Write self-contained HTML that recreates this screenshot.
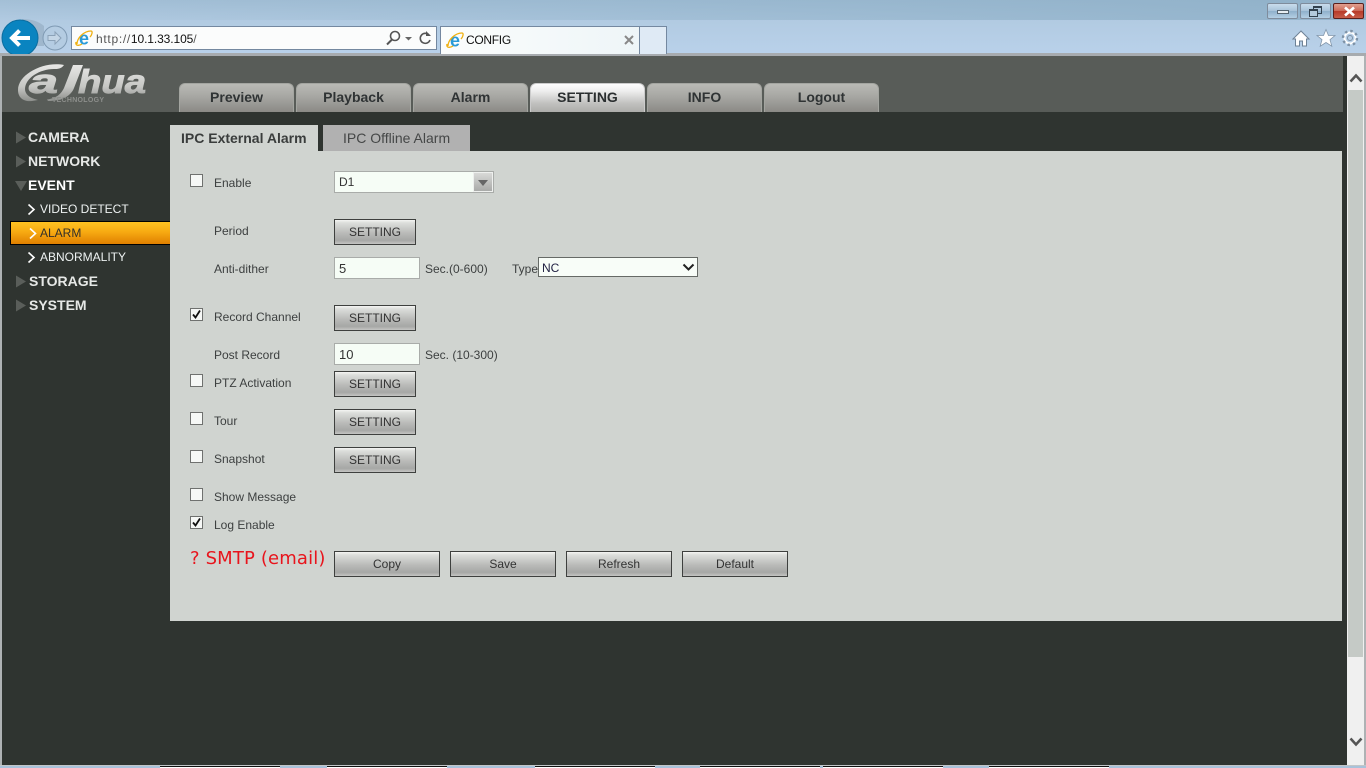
<!DOCTYPE html>
<html><head><meta charset="utf-8"><title>CONFIG</title>
<style>
html,body{margin:0;padding:0;width:1366px;height:768px;overflow:hidden;background:#b9d1ea;font-family:"Liberation Sans",Arial,sans-serif}
div,span,svg{position:absolute;box-sizing:border-box}
.t{white-space:nowrap;line-height:1}
.tab{top:83px;height:29px;width:115px;border:1px solid #a3a5a0;border-bottom:none;border-radius:6px 6px 0 0;background:linear-gradient(#b9bab5,#a9a9a5 40%,#8b8a86);color:#2f3334;font:bold 14px/27px "Liberation Sans",sans-serif;text-align:center}
.tab.on{background:linear-gradient(#fdfdfd,#eeeeee 25%,#c0c0be 70%,#adadaa);color:#2b2f30;border-color:#ccc}
.m{left:28px;color:#e6e8e6;font:bold 14px/1 "Liberation Sans",sans-serif;white-space:nowrap}
.s{color:#eef2f2;font:12px/1 "Liberation Sans",sans-serif;white-space:nowrap}
.l{color:#3d4040;font:12px/1 "Liberation Sans",sans-serif;white-space:nowrap}
.cb{left:190px;width:13px;height:13px;border:1px solid #6f716f;background:#f6f8f6}
.btn{border:1px solid #3e403e;background:linear-gradient(#f4f5f3,#dcdedb 12%,#b9bab8 55%,#a6a7a5 85%,#c4c5c3);color:#333;font:12px/25px "Liberation Sans",sans-serif;text-align:center;height:26px}
.inp{left:334px;width:86px;height:22px;border:1px solid #a9aca9;background:#f6fdf6;color:#333;font:13px/21px "Liberation Sans",sans-serif;padding-left:4px}
.sw{border:1px solid #7f8c9c;border-radius:2px;top:3px;height:16px;width:31px;background:linear-gradient(#c9dcec,#a9c4da 48%,#8fb0cb 52%,#b4cfe4)}
</style></head><body>
<!-- browser chrome -->
<div style="left:0;top:0;width:1366px;height:54px;background:linear-gradient(#a3bfd6,#b2cbe2 40%,#b9d1ea)"></div>
<div style="left:0;top:0;width:1366px;height:20px;background:linear-gradient(90deg,rgba(147,179,203,0),rgba(140,174,198,.8))"></div>
<div style="left:0;top:53px;width:1366px;height:3px;background:#a7abaf"></div>
<svg style="left:0;top:16px" width="70" height="38"><path d="M22 3 Q36 3 44 10 L44 30 L22 30Z" fill="#9fb7cd"/><circle cx="20" cy="22" r="18" fill="#0a84c0" stroke="#0a6d9f"/><path d="M30 22H13M19.500 14.500L12 22l7.500 7.500" fill="none" stroke="#fff" stroke-width="4"/><circle cx="55" cy="22" r="12" fill="#b4cce2" stroke="#7f9ab3"/><path d="M48 19.500h7v-3.500l6 6-6 6v-3.500h-7z" fill="#c4d6e6" stroke="#8ba2b8" stroke-width="1"/></svg>
<div style="left:71px;top:26px;width:366px;height:24px;border:1px solid #7488a0;background:#fbfcfc"></div>
<svg style="left:75px;top:29px" width="18" height="18" viewBox="0 0 18 18"><text x="9" y="15.500" text-anchor="middle" font-family="Liberation Sans" font-weight="bold" font-size="18" fill="#2a9bd8">e</text><path d="M2 15C2 9 9 2 16 2c2 0 1 4-1 6M1 13c-1 4 3 4 6 2" fill="none" stroke="#efb010" stroke-width="1.300"/></svg>
<div class="t" style="left:96px;top:33px;font-size:12px;color:#555"><span style="position:static;letter-spacing:.7px">http://</span><span style="position:static;color:#111;letter-spacing:-.1px">10.1.33.105</span>/</div>
<svg style="left:384px;top:29px" width="50" height="18"><circle cx="11" cy="7" r="4.500" fill="none" stroke="#555" stroke-width="1.600"/><path d="M8 10.500L3 15.500" stroke="#555" stroke-width="2"/><path d="M21 8h7l-3.500 3.500z" fill="#666"/><path d="M45 6a5 5 0 1 0 1 5" fill="none" stroke="#555" stroke-width="1.600"/><path d="M42 2v5h5z" fill="#555"/></svg>
<div style="left:440px;top:26px;width:227px;height:28px;border:1px solid #7488a0;border-bottom:none;background:#dfeaf5"></div>
<div style="left:440px;top:26px;width:200px;height:28px;border:1px solid #7488a0;border-bottom:none;background:linear-gradient(90deg,#fbfdfc,#eef5f8)"></div>
<svg style="left:446px;top:31px" width="18" height="18" viewBox="0 0 18 18"><text x="9" y="15.500" text-anchor="middle" font-family="Liberation Sans" font-weight="bold" font-size="18" fill="#2a9bd8">e</text><path d="M2 15C2 9 9 2 16 2c2 0 1 4-1 6M1 13c-1 4 3 4 6 2" fill="none" stroke="#efb010" stroke-width="1.300"/></svg>
<div class="t" style="left:466px;top:34px;font-size:12px;color:#111;letter-spacing:-.3px">CONFIG</div>
<svg style="left:624px;top:35px" width="10" height="10"><path d="M1 1l8 8M9 1l-8 8" stroke="#888" stroke-width="2"/></svg>
<div class="sw" style="left:1267px"><div style="left:9px;top:6px;width:12px;height:4px;background:#e8eef2;border:1px solid #55646f"></div></div>
<div class="sw" style="left:1300px"><div style="left:12px;top:2px;width:9px;height:8px;border:1px solid #33424f;border-top-width:2px"></div><div style="left:8px;top:5px;width:9px;height:8px;border:1px solid #33424f;border-top-width:2px;background:#b4cbdd"></div></div>
<div class="sw" style="left:1333px;width:31px;border-color:#5a1f1c;background:linear-gradient(#e0a090,#cc6a58 48%,#b83a28 52%,#c65c48)"><svg style="left:9px;top:2px" width="13" height="11"><path d="M2 1.500l9 8M11 1.500l-9 8" stroke="#fff" stroke-width="2.600"/></svg></div>
<svg style="left:1292px;top:28px" width="70" height="20"><path d="M9 3L1 11h2.500v7h4v-5h3v5h4v-7H17z" fill="#fff" stroke="#6e8296"/><path d="M34 1.500l2.500 6h6.500l-5 4.200 1.800 6.500-5.800-3.700-5.800 3.700 1.800-6.500-5-4.200h6.500z" fill="#fff" stroke="#8296aa" stroke-width=".8"/><circle cx="58" cy="10" r="5.500" fill="none" stroke="#fff" stroke-width="2"/><circle cx="58" cy="10" r="7" fill="none" stroke="#7e92a6" stroke-width="2.400" stroke-dasharray="2.500 3"/><circle cx="58" cy="10" r="2.500" fill="none" stroke="#7e92a6"/></svg>

<!-- page -->
<div style="left:0;top:56px;width:1366px;height:709px;background:#2f3430"></div>
<div style="left:0;top:56px;width:2px;height:712px;background:#aeb2b4"></div>
<div style="left:2px;top:56px;width:1341px;height:56px;background:#585c58"></div>
<svg style="left:14px;top:60px" width="136" height="46" viewBox="0 0 136 46">
<defs><linearGradient id="g2" gradientUnits="userSpaceOnUse" x1="0" y1="4" x2="0" y2="42"><stop offset="0" stop-color="#e8e8e6"/><stop offset=".6" stop-color="#c6c7c4"/><stop offset="1" stop-color="#8a8c89"/></linearGradient></defs>
<path d="M50 5C30 1 4 14 4 30C4 38 10 42 18 41L24 40C15 38 11 34 11 29C11 18 26 9 40 9C44 9 47 9 50 5Z" fill="url(#g2)"/>
<text x="15" y="33" font-family="Liberation Sans" font-weight="bold" font-style="italic" font-size="34" fill="url(#g2)" stroke="url(#g2)" stroke-width=".9" textLength="29" lengthAdjust="spacingAndGlyphs">a</text>
<path d="M59 5H69L60 28C57 36 48 41 34 41L33 39.500C43 38 47 34 50 28Z" fill="url(#g2)"/>
<text x="64" y="33" font-family="Liberation Sans" font-weight="bold" font-style="italic" font-size="33" fill="url(#g2)" stroke="url(#g2)" stroke-width=".9" textLength="68" lengthAdjust="spacingAndGlyphs">hua</text>
<text x="38" y="42" font-family="Liberation Sans" font-weight="bold" font-size="7" fill="#8d8f8c" textLength="52">TECHNOLOGY</text>
</svg>
<div class="tab" style="left:179px">Preview</div>
<div class="tab" style="left:296px">Playback</div>
<div class="tab" style="left:413px">Alarm</div>
<div class="tab on" style="left:530px">SETTING</div>
<div class="tab" style="left:647px">INFO</div>
<div class="tab" style="left:764px">Logout</div>

<!-- sidebar -->
<svg style="left:14px;top:128px" width="16" height="190"><g fill="#5a5e5a"><path d="M2 3.500l10 6-10 6z"/><path d="M2 27.500l10 6-10 6z"/><path d="M1 53h12l-6 10z"/><path d="M2 147.500l10 6-10 6z"/><path d="M2 171.500l10 6-10 6z"/></g></svg>
<div class="m" style="top:130px">CAMERA</div>
<div class="m" style="top:154px">NETWORK</div>
<div class="m" style="top:178px;color:#fff">EVENT</div>
<svg style="left:26px;top:202px" width="12" height="62"><path d="M2.500 2.500l5.500 5-5.500 5" fill="none" stroke="#fff" stroke-width="1.600"/><path d="M2.500 50.500l5.500 5-5.500 5" fill="none" stroke="#fff" stroke-width="1.600"/></svg>
<div style="left:10px;top:221px;width:160px;height:24px;border:1px solid #000;border-right:none;background:linear-gradient(#fec222,#f7aa12 45%,#e08000)"></div>
<svg style="left:26px;top:226px" width="12" height="14"><path d="M4 2.500l5.500 5-5.500 5" fill="none" stroke="#fff" stroke-width="1.600"/></svg>
<div class="s" style="left:40px;top:203px">VIDEO DETECT</div>
<div class="s" style="left:40px;top:227px;color:#33302a">ALARM</div>
<div class="s" style="left:40px;top:251px">ABNORMALITY</div>
<div class="m" style="left:29px;top:274px">STORAGE</div>
<div class="m" style="left:29px;top:298px">SYSTEM</div>

<!-- content tabs -->
<div style="left:170px;top:125px;width:148px;height:26px;background:#d0d4d0"></div>
<div class="t" style="left:181px;top:131px;font:bold 14px/1 'Liberation Sans',sans-serif;color:#3a3d3c">IPC External Alarm</div>
<div style="left:323px;top:125px;width:147px;height:26px;background:#b1b1b1"></div>
<div class="t" style="left:343px;top:131px;font-size:14px;color:#454747">IPC Offline Alarm</div>
<div style="left:170px;top:151px;width:1172px;height:470px;background:#d0d4d0"></div>

<!-- form -->
<div class="cb" style="top:174px"></div><div class="l" style="left:214px;top:177px">Enable</div>
<div style="left:334px;top:171px;width:160px;height:22px;border:1px solid #a9aca9;background:#f6fdf6"></div>
<div class="t" style="left:339px;top:176px;font-size:12px;color:#333">D1</div>
<div style="left:473px;top:172px;width:20px;height:20px;border:1px solid #eef0ee;background:linear-gradient(#d8d9d7,#a9aaa8)"></div>
<svg style="left:478px;top:180px" width="10" height="6"><path d="M0 0h10L5 6z" fill="#666"/></svg>
<div class="l" style="left:214px;top:225px">Period</div>
<div class="btn" style="left:334px;top:219px;width:82px">SETTING</div>
<div class="l" style="left:214px;top:263px">Anti-dither</div>
<div class="inp" style="top:257px">5</div>
<div class="l" style="left:425px;top:263px">Sec.(0-600)</div>
<div class="l" style="left:512px;top:263px">Type</div>
<div style="left:538px;top:257px;width:160px;height:20px;border:1px solid #666a66;background:#f8fdf8"></div>
<div class="t" style="left:542px;top:262px;font-size:12px;color:#224">NC</div>
<svg style="left:682px;top:263px" width="13" height="9"><path d="M1.500 1.500L6.500 6.500L11.500 1.500" fill="none" stroke="#222" stroke-width="2"/></svg>
<div class="cb" style="top:308px"></div>
<svg style="left:190px;top:308px" width="13" height="13"><path d="M3 6.500l2.500 3L10 2.500" fill="none" stroke="#111" stroke-width="1.800"/></svg>
<div class="l" style="left:214px;top:311px">Record Channel</div>
<div class="btn" style="left:334px;top:305px;width:82px">SETTING</div>
<div class="l" style="left:214px;top:349px">Post Record</div>
<div class="inp" style="top:343px">10</div>
<div class="l" style="left:425px;top:349px">Sec. (10-300)</div>
<div class="cb" style="top:374px"></div><div class="l" style="left:214px;top:377px">PTZ Activation</div>
<div class="btn" style="left:334px;top:371px;width:82px">SETTING</div>
<div class="cb" style="top:412px"></div><div class="l" style="left:214px;top:415px">Tour</div>
<div class="btn" style="left:334px;top:409px;width:82px">SETTING</div>
<div class="cb" style="top:450px"></div><div class="l" style="left:214px;top:453px">Snapshot</div>
<div class="btn" style="left:334px;top:447px;width:82px">SETTING</div>
<div class="cb" style="top:488px"></div><div class="l" style="left:214px;top:491px">Show Message</div>
<div class="cb" style="top:516px"></div>
<svg style="left:190px;top:516px" width="13" height="13"><path d="M3 6.500l2.500 3L10 2.500" fill="none" stroke="#111" stroke-width="1.800"/></svg>
<div class="l" style="left:214px;top:519px">Log Enable</div>
<div class="t" style="left:190px;top:550px;font:18px/1 'DejaVu Sans',sans-serif;color:#e8141c;letter-spacing:.15px">? SMTP (email)</div>
<div class="btn" style="left:334px;top:551px;width:106px">Copy</div>
<div class="btn" style="left:450px;top:551px;width:106px">Save</div>
<div class="btn" style="left:566px;top:551px;width:106px">Refresh</div>
<div class="btn" style="left:682px;top:551px;width:106px">Default</div>

<!-- scrollbar -->
<div style="left:1347px;top:56px;width:17px;height:709px;background:#f0f0f0"></div>
<div style="left:1364px;top:56px;width:2px;height:712px;background:#aeb2b4"></div>
<div style="left:1348px;top:90px;width:15px;height:567px;background:#c5cac6"></div>
<svg style="left:1349px;top:72px" width="14" height="12"><path d="M1.500 9.500L7 3.500l5.500 6" fill="none" stroke="#555" stroke-width="2.600"/></svg>
<svg style="left:1349px;top:736px" width="14" height="12"><path d="M1.500 2.500L7 8.500l5.500-6" fill="none" stroke="#555" stroke-width="2.600"/></svg>

<!-- bottom strip -->
<div style="left:0;top:765px;width:1366px;height:3px;background:#a9c2da"></div>
<div style="left:0;top:765px;width:1366px;height:1px;background:#c2c6c8"></div>
<div style="left:160px;top:766px;width:120px;height:2px;background:#fff;border-top:1px solid #111"></div>
<div style="left:327px;top:766px;width:120px;height:2px;background:#fff;border-top:1px solid #111"></div>
<div style="left:535px;top:766px;width:120px;height:2px;background:#fff;border-top:1px solid #111"></div>
<div style="left:700px;top:766px;width:120px;height:2px;background:#fff;border-top:1px solid #111"></div>
<div style="left:823px;top:766px;width:120px;height:2px;background:#fff;border-top:1px solid #111"></div>
<div style="left:989px;top:766px;width:120px;height:2px;background:#fff;border-top:1px solid #111"></div>
</body></html>
